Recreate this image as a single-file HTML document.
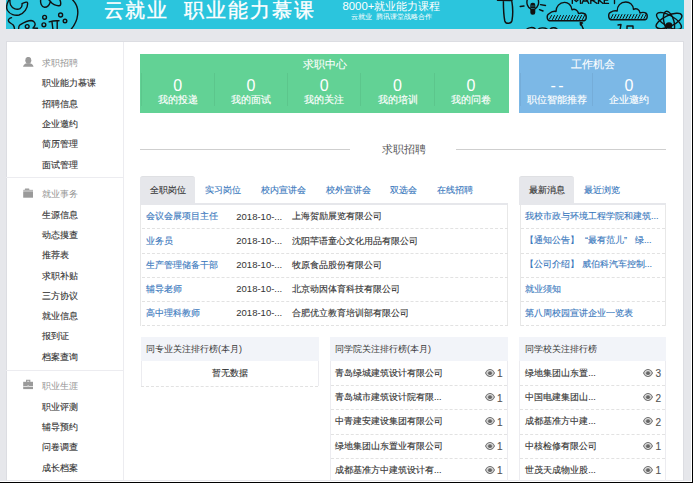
<!DOCTYPE html>
<html><head><meta charset="utf-8">
<style>
*{margin:0;padding:0;box-sizing:border-box}
html,body{width:693px;height:483px;overflow:hidden}
body{background:#e6e7eb;font-family:"Liberation Sans",sans-serif;position:relative;color:#333}
.a{position:absolute;white-space:nowrap}
.sb,.txt,.lnk,.tab{-webkit-text-stroke:0.12px currentColor}
#banner{left:6px;top:0;width:678px;height:29px;background:#2bc5dd;overflow:hidden}
#panel{left:6px;top:41px;width:678px;height:440px;background:#fff;border:1px solid #dcdde2;border-bottom:1px solid #e8e8ec}
#vdiv{left:123px;top:42px;width:1px;height:438px;background:#ececf0}
.sb{font-size:9px;line-height:12px;color:#333;left:42px}
.sh{font-size:9px;line-height:12px;color:#929292;left:42px}
.sep{left:6px;width:117px;height:1px;background:#ececf0}
.box{color:#fff;text-align:center}
.col{position:absolute;top:18.5px;height:33px;border-left:1px solid rgba(0,0,0,0.055)}
.num{position:absolute;left:0;right:0;top:5px;font-size:16px;line-height:16px}
.lab{position:absolute;left:0;right:0;top:21px;font-size:9.5px;line-height:12px;-webkit-text-stroke:0.15px #fff}
.tt{font-size:11px;line-height:12px;-webkit-text-stroke:0.1px #fff}
.tab{font-size:9px;line-height:12px;color:#3978bd}
.lnk{font-size:9px;line-height:12px;color:#3978bd}
.txt{font-size:9px;line-height:12px;color:#333}
.dash{height:0;border-top:1px dashed #e2e2e2}
</style></head><body>
<div id="banner" class="a"><svg class="a" style="left:0;top:0" width="678" height="29" viewBox="6 0 678 29" fill="none" stroke="#111" stroke-width="1.4" stroke-linecap="round" stroke-linejoin="round">
<path d="M9.4 -1 C7 3 5.5 7 7.5 10.5 C10 14.5 15 16 19 15 C24 13.5 28 8 27.6 3 C27.4 1.6 25.5 2 22 3.6 C22.3 5.5 22 7.5 20 8.6 C17 10 12.5 9 10.6 5 C9.8 3.5 9.8 1.5 10 -1"/>
<path d="M40.8 -1 C40 3 41.5 7 44.5 7.3 C47.5 7.5 49.5 4.5 50.5 1.5 C52 4 56 6 59 5.7 C61.5 5.5 61 2 59.5 -1"/>
<path d="M50.5 1.5 C49 0 48 -1 47.5 -2"/>
<path d="M71.8 -1 C76 3 78.5 9 77.6 15 C77 21 74 26 70.5 30"/>
<circle cx="44.6" cy="17.3" r="1.9"/>
<circle cx="43.9" cy="24.8" r="1.9"/>
<circle cx="60.6" cy="15" r="2"/>
<circle cx="65" cy="21" r="1.8"/>
<path d="M49.2 21.8 C52 21 56 20.5 59 20.8"/>
<path d="M52 22 L53 30 M57.2 21.5 L57.2 30"/>
<path d="M11.5 17.6 C9.5 18 8 19.5 8.5 21 C9 23 12 23.5 13.2 25 C14 26 14.5 27.5 14.6 30"/>
<path d="M18.6 30 C18.5 27.5 19 25.5 20 24.8 C24 22.5 28 20.5 31 20.5 C34 20.7 35.5 23 35 25 C34.6 26.5 33.5 27.5 33 28 L37.5 28.3"/>
<circle cx="27.2" cy="26.5" r="1.9"/>

<path d="M497.5 0.3 L512 0.5 M503.4 1 C503.4 8 503.8 16 504.8 21 C505.8 24.2 511 24.2 512 20.5 C513 15 512.8 7 511.8 1" stroke-width="1.45"/>
<path d="M527.5 -1 C526 3 527.5 7.5 531 9 M538 -1 C539.5 3 538 7.5 534.5 9"/>
<rect x="531" y="3.5" width="3.6" height="10.5" rx="1.6" fill="#111"/><path d="M531.3 6 L534.3 6 M531.3 8.5 L534.3 8.5" stroke="#2bc5dd" stroke-width="0.5"/>
<path d="M520.2 6.5 L524 6 M540.5 4.6 L545.5 5.5 M539.5 9.6 L543 11"/>
<path d="M549 13.8 C546.5 14.5 546.5 20 549.5 20.8 L584 20.8 C587 20 587 14.5 584 13.5 C582 12.5 580 13 578.5 13.6 C578 10 574.5 8.5 572 9.8 C571.5 5 568 2.3 564.5 2.4 C559.5 2.5 556 6.5 556 11.5 C554 11 551 12 549 13.8"/>
<path d="M549.5 19 L551.5 15.5 M552.5 19.5 L554.5 15.5 M555.5 19.5 L557.5 15.5 M558.5 19.5 L560.5 15.5 M561.5 19.5 L563.5 15.5 M564.5 19.5 L566.5 15.5 M567.5 19.5 L569.5 15.5 M570.5 19.5 L572.5 15.5 M573.5 19.5 L575.5 15.5 M576.5 19.5 L578.5 15.5 M579.5 19.5 L581.5 15.5 M582.5 19.5 L584.5 15.5" stroke-width="1"/>
<path d="M580.5 22.5 L583.5 29.5 M580.3 22.5 L580.5 25 M580.3 22.5 L582.5 23"/>
<path d="M526.5 29.5 C528 27.3 533 27 535 28.5 M538 29.5 C539 27.5 545 27.3 547 29 M550 29.5 C551 27.5 555 27 557 29"/>
<path d="M572.3 -2 L572.3 3.4 M572.3 -2 L576.3 1.5 L580.3 -2 L580.5 3.4 M582 3.4 L584.8 -3 L588.8 3.4 M583 1 L587.8 1 M590.8 -3 L590.8 3.4 M590.8 0.6 C594.5 0.6 596.5 -0.5 596 -3 M593 0.8 L597 3.4 M598.5 -3 L598.5 3.4 M598.8 1 L602.5 -2.5 M599.5 0.5 L603 3.4 M604.3 -3 L604.3 3.4 L608.5 3.4 M604.3 0 L607.8 0 M614.5 -2 L614.5 3.6" stroke-width="1.35"/>
<path d="M610.5 12.3 C608 13 608 19 611 19.8 L645 19.8 C648 19 648 13.5 645 12.7 C643 12 641.5 12.3 640 13 C639.5 9 636 8 633.5 9.4 C633 4.5 629.5 2 625.8 2 C620.5 2 617 6 617.2 11 C615 10.5 612.5 11 610.5 12.3"/>
<path d="M611 18.5 L613 14.5 M614 18.5 L616 14.5 M617 18.5 L619 14.5 M620 18.5 L622 14.5 M623 18.5 L625 14.5 M626 18.5 L628 14.5 M629 18.5 L631 14.5 M632 18.5 L634 14.5 M635 18.5 L637 14.5 M638 18.5 L640 14.5 M641 18.5 L643 14.5 M644 18.5 L646 14.5" stroke-width="1"/>
<path d="M618 25 L621 24.5 L620 30 M627 29.5 L627 26 L633 26 L633 29.5"/>
<ellipse cx="669" cy="21" rx="14" ry="5.5" transform="rotate(-25 669 21)"/>
<ellipse cx="669" cy="21" rx="14" ry="5.5" transform="rotate(30 669 21)"/>
<ellipse cx="669" cy="22" rx="5" ry="11" transform="rotate(-15 669 22)"/>
<circle cx="669" cy="25.5" r="2.6" fill="#111"/>
</svg>

<div class="a" style="left:98px;top:-2px;font-size:19.5px;line-height:24px;color:#fff;font-weight:400;-webkit-text-stroke:0.35px #fff;letter-spacing:1.3px">云就业</div>
<div class="a" style="left:178px;top:-2px;font-size:19.5px;line-height:24px;color:#fff;font-weight:400;-webkit-text-stroke:0.35px #fff;letter-spacing:2px">职业能力慕课</div>
<div class="a" style="left:336.5px;top:-1.5px;font-size:11.35px;line-height:14px;color:#fff;font-weight:300">8000+就业能力课程</div>
<div class="a" style="left:345px;top:12.8px;font-size:10px;line-height:10px;color:#fff;transform:scale(0.70);transform-origin:0 0">云就业 &nbsp;腾讯课堂战略合作</div>
</div>
<div id="panel" class="a"></div>
<div id="vdiv" class="a"></div>
<div class="a sh" style="top:57.2px">求职招聘</div>
<div class="a sb" style="top:77.2px">职业能力慕课</div>
<div class="a sb" style="top:97.6px">招聘信息</div>
<div class="a sb" style="top:118.0px">企业邀约</div>
<div class="a sb" style="top:138.3px">简历管理</div>
<div class="a sb" style="top:158.5px">面试管理</div>
<div class="a sep" style="top:177px"></div>
<div class="a sh" style="top:187.5px">就业事务</div>
<div class="a sb" style="top:208.6px">生源信息</div>
<div class="a sb" style="top:228.9px">动态摸查</div>
<div class="a sb" style="top:249.2px">推荐表</div>
<div class="a sb" style="top:269.5px">求职补贴</div>
<div class="a sb" style="top:289.8px">三方协议</div>
<div class="a sb" style="top:310.1px">就业信息</div>
<div class="a sb" style="top:330.4px">报到证</div>
<div class="a sb" style="top:350.7px">档案查询</div>
<div class="a sep" style="top:370px"></div>
<div class="a sh" style="top:380.0px">职业生涯</div>
<div class="a sb" style="top:400.6px">职业评测</div>
<div class="a sb" style="top:421.0px">辅导预约</div>
<div class="a sb" style="top:441.3px">问卷调查</div>
<div class="a sb" style="top:461.7px">成长档案</div>

<svg class="a" style="left:23px;top:57px" width="11" height="10" viewBox="0 0 11 10"><ellipse cx="5.3" cy="3.3" rx="3" ry="3.4" fill="#9a9a9a"/><path d="M0 9.8 C0.6 7.6 2.2 6.6 4 6.3 L6.6 6.3 C8.4 6.6 10 7.6 10.6 9.8 Z" fill="#9a9a9a"/></svg>
<svg class="a" style="left:23px;top:188px" width="11" height="10" viewBox="0 0 11 10"><rect x="1.8" y="0.6" width="4.6" height="1.4" rx="0.6" fill="#9a9a9a"/><rect x="0.2" y="1.8" width="9.8" height="2.1" fill="#b8b8b8"/><rect x="0.2" y="3.9" width="9.8" height="5.8" fill="#9a9a9a"/></svg>
<svg class="a" style="left:23px;top:379px" width="11" height="11" viewBox="0 0 11 11"><rect x="3.6" y="1.3" width="3.2" height="2" fill="none" stroke="#9a9a9a" stroke-width="1.1"/><rect x="0.2" y="2.8" width="9.8" height="7.3" fill="#9a9a9a"/><rect x="0.2" y="7" width="9.8" height="0.7" fill="#fff"/><rect x="4.4" y="6" width="1.5" height="1.5" fill="#c8c8c8"/></svg>

<div class="a box" style="left:140px;top:54px;width:369px;height:58.5px;background:#62d295"><div class="a tt" style="left:0;right:0;top:4.1px">求职中心</div><div class="col" style="left:0.5px;width:73.3px"><div class="num">0</div><div class="lab">我的投递</div></div><div class="col" style="left:73.8px;width:73.3px"><div class="num">0</div><div class="lab">我的面试</div></div><div class="col" style="left:147.1px;width:73.3px"><div class="num">0</div><div class="lab">我的关注</div></div><div class="col" style="left:220.4px;width:73.3px"><div class="num">0</div><div class="lab">我的培训</div></div><div class="col" style="left:293.7px;width:73.3px"><div class="num">0</div><div class="lab">我的问卷</div></div></div>
<div class="a box" style="left:519.3px;top:54px;width:147px;height:58.5px;background:#7cb8e6"><div class="a tt" style="left:0;right:0;top:4.1px">工作机会</div><div class="col" style="left:1px;width:72.4px"><div class="num" style="letter-spacing:2.5px;text-indent:2.5px">--</div><div class="lab">职位智能推荐</div></div><div class="col" style="left:72.4px;width:73.3px"><div class="num">0</div><div class="lab">企业邀约</div></div></div>
<div class="a" style="left:140px;top:149px;width:210px;height:1px;background:#cfcfcf"></div><div class="a" style="left:456px;top:149px;width:210px;height:1px;background:#cfcfcf"></div><div class="a" style="left:382px;top:142.7px;font-size:10.5px;line-height:12px;color:#555">求职招聘</div>
<div class="a" style="left:140.4px;top:176px;width:54.6px;height:27.5px;background:#e6e7eb;border-radius:3px 3px 0 0;border-top:1px solid #dfe0e3"></div><div class="a" style="left:140px;top:203px;width:368px;height:2px;background:#e6e7eb"></div><div class="a tab" style="left:149.7px;top:184.3px;color:#333">全职岗位</div><div class="a tab" style="left:204.7px;top:184.3px;">实习岗位</div><div class="a tab" style="left:261.0px;top:184.3px;">校内宣讲会</div><div class="a tab" style="left:325.7px;top:184.3px;">校外宣讲会</div><div class="a tab" style="left:390.4px;top:184.3px;">双选会</div><div class="a tab" style="left:436.9px;top:184.3px;">在线招聘</div><div class="a" style="left:519.4px;top:176px;width:54.6px;height:27.5px;background:#e6e7eb;border-radius:3px 3px 0 0;border-top:1px solid #dfe0e3"></div><div class="a" style="left:519.4px;top:203px;width:146.6px;height:2px;background:#e6e7eb"></div><div class="a tab" style="left:528.5px;top:184.3px;color:#333">最新消息</div><div class="a tab" style="left:584.2px;top:184.3px">最近浏览</div>
<div class="a" style="left:140px;top:205px;width:368px;height:120.5px;border-left:1px solid #e8e8e8;border-right:1px solid #e8e8e8"></div><div class="a lnk" style="left:145.7px;top:210.4px">会议会展项目主任</div><div class="a txt" style="left:236.3px;top:210.9px;font-size:9.5px;-webkit-text-stroke:0">2018-10-...</div><div class="a txt" style="left:292.4px;top:210.4px">上海贺励展览有限公司</div><div class="a dash" style="left:141.5px;top:228.3px;width:366px"></div><div class="a lnk" style="left:145.7px;top:234.5px">业务员</div><div class="a txt" style="left:236.3px;top:235.0px;font-size:9.5px;-webkit-text-stroke:0">2018-10-...</div><div class="a txt" style="left:292.4px;top:234.5px">沈阳芊语童心文化用品有限公司</div><div class="a dash" style="left:141.5px;top:252.5px;width:366px"></div><div class="a lnk" style="left:145.7px;top:258.5px">生产管理储备干部</div><div class="a txt" style="left:236.3px;top:259.0px;font-size:9.5px;-webkit-text-stroke:0">2018-10-...</div><div class="a txt" style="left:292.4px;top:258.5px">牧原食品股份有限公司</div><div class="a dash" style="left:141.5px;top:276.6px;width:366px"></div><div class="a lnk" style="left:145.7px;top:282.6px">辅导老师</div><div class="a txt" style="left:236.3px;top:283.1px;font-size:9.5px;-webkit-text-stroke:0">2018-10-...</div><div class="a txt" style="left:292.4px;top:282.6px">北京动因体育科技有限公司</div><div class="a dash" style="left:141.5px;top:300.8px;width:366px"></div><div class="a lnk" style="left:145.7px;top:306.6px">高中理科教师</div><div class="a txt" style="left:236.3px;top:307.1px;font-size:9.5px;-webkit-text-stroke:0">2018-10-...</div><div class="a txt" style="left:292.4px;top:306.6px">合肥优立教育培训部有限公司</div><div class="a dash" style="left:141.5px;top:324.9px;width:366px"></div>
<div class="a" style="left:519.5px;top:205px;width:146.3px;height:120.5px;border-left:1px solid #e8e8e8;border-right:1px solid #e8e8e8"></div><div class="a lnk" style="left:525px;top:210.3px">我校市政与环境工程学院和建筑...</div><div class="a dash" style="left:520.5px;top:228.3px;width:144.3px"></div><div class="a lnk" style="left:525px;top:234.4px">【通知公告】<span style="display:inline-block;width:9px;text-align:right">“</span>最有范儿<span style="display:inline-block;width:11px;text-align:left">”</span>绿...</div><div class="a dash" style="left:520.5px;top:252.5px;width:144.3px"></div><div class="a lnk" style="left:525px;top:258.4px">【公司介绍】 威伯科汽车控制...</div><div class="a dash" style="left:520.5px;top:276.6px;width:144.3px"></div><div class="a lnk" style="left:525px;top:282.5px">就业须知</div><div class="a dash" style="left:520.5px;top:300.8px;width:144.3px"></div><div class="a lnk" style="left:525px;top:306.5px">第八周校园宣讲企业一览表</div><div class="a dash" style="left:520.5px;top:324.9px;width:144.3px"></div>
<div class="a" style="left:140.5px;top:337px;width:178.2px;height:49.0px;border:1px solid #ececf0;border-bottom:none"></div><div class="a" style="left:140.5px;top:337px;width:178.2px;height:24px;background:#f2f4f9"></div><div class="a txt" style="left:146.0px;top:343.4px;-webkit-text-stroke:0;color:#3a3a3a">同专业关注排行榜(本月)</div><div class="a txt" style="left:140.5px;width:178.2px;text-align:center;top:367px">暂无数据</div><div class="a dash" style="left:141px;top:385.5px;width:177.2px"></div><div class="a" style="left:329.5px;top:337px;width:178.7px;height:144.0px;border:1px solid #ececf0;border-bottom:none"></div><div class="a" style="left:329.5px;top:337px;width:178.7px;height:24px;background:#f2f4f9"></div><div class="a txt" style="left:335.0px;top:343.4px;-webkit-text-stroke:0;color:#3a3a3a">同学院关注排行榜(本月)</div><div class="a" style="left:519.4px;top:337px;width:146.7px;height:144.0px;border:1px solid #ececf0;border-bottom:none"></div><div class="a" style="left:519.4px;top:337px;width:146.7px;height:24px;background:#f2f4f9"></div><div class="a txt" style="left:524.9px;top:343.4px;-webkit-text-stroke:0;color:#3a3a3a">同学校关注排行榜</div><div class="a txt" style="left:335px;top:367.3px">青岛绿城建筑设计有限公司</div><svg class="a" style="left:485.0px;top:369.3px" width="10" height="8" viewBox="0 0 10 8"><path d="M0.5 4 C2 1.2 3.5 0.5 5 0.5 C6.5 0.5 8 1.2 9.5 4 C8 6.8 6.5 7.5 5 7.5 C3.5 7.5 2 6.8 0.5 4 Z" fill="none" stroke="#7a7a7a" stroke-width="1.2"/><path d="M2 4 C3 2.3 4 1.8 5 1.8 C6 1.8 7 2.3 8 4 C7 5.7 6 6.2 5 6.2 C4 6.2 3 5.7 2 4 Z" fill="#aaa"/><circle cx="5" cy="4.3" r="1.8" fill="#666"/></svg><div class="a txt" style="left:497px;top:368.4px;font-size:10px;color:#555">1</div><div class="a txt" style="left:525.2px;top:367.3px">绿地集团山东置...</div><svg class="a" style="left:643.3px;top:369.3px" width="10" height="8" viewBox="0 0 10 8"><path d="M0.5 4 C2 1.2 3.5 0.5 5 0.5 C6.5 0.5 8 1.2 9.5 4 C8 6.8 6.5 7.5 5 7.5 C3.5 7.5 2 6.8 0.5 4 Z" fill="none" stroke="#7a7a7a" stroke-width="1.2"/><path d="M2 4 C3 2.3 4 1.8 5 1.8 C6 1.8 7 2.3 8 4 C7 5.7 6 6.2 5 6.2 C4 6.2 3 5.7 2 4 Z" fill="#aaa"/><circle cx="5" cy="4.3" r="1.8" fill="#666"/></svg><div class="a txt" style="left:655.5px;top:368.4px;font-size:10px;color:#555">3</div><div class="a dash" style="left:330.5px;top:385.4px;width:176.7px"></div><div class="a dash" style="left:520.4px;top:385.4px;width:144.7px"></div><div class="a txt" style="left:335px;top:391.4px">青岛城市建筑设计院有限...</div><svg class="a" style="left:485.0px;top:393.4px" width="10" height="8" viewBox="0 0 10 8"><path d="M0.5 4 C2 1.2 3.5 0.5 5 0.5 C6.5 0.5 8 1.2 9.5 4 C8 6.8 6.5 7.5 5 7.5 C3.5 7.5 2 6.8 0.5 4 Z" fill="none" stroke="#7a7a7a" stroke-width="1.2"/><path d="M2 4 C3 2.3 4 1.8 5 1.8 C6 1.8 7 2.3 8 4 C7 5.7 6 6.2 5 6.2 C4 6.2 3 5.7 2 4 Z" fill="#aaa"/><circle cx="5" cy="4.3" r="1.8" fill="#666"/></svg><div class="a txt" style="left:497px;top:392.5px;font-size:10px;color:#555">1</div><div class="a txt" style="left:525.2px;top:391.4px">中国电建集团山...</div><svg class="a" style="left:643.3px;top:393.4px" width="10" height="8" viewBox="0 0 10 8"><path d="M0.5 4 C2 1.2 3.5 0.5 5 0.5 C6.5 0.5 8 1.2 9.5 4 C8 6.8 6.5 7.5 5 7.5 C3.5 7.5 2 6.8 0.5 4 Z" fill="none" stroke="#7a7a7a" stroke-width="1.2"/><path d="M2 4 C3 2.3 4 1.8 5 1.8 C6 1.8 7 2.3 8 4 C7 5.7 6 6.2 5 6.2 C4 6.2 3 5.7 2 4 Z" fill="#aaa"/><circle cx="5" cy="4.3" r="1.8" fill="#666"/></svg><div class="a txt" style="left:655.5px;top:392.5px;font-size:10px;color:#555">2</div><div class="a dash" style="left:330.5px;top:409.4px;width:176.7px"></div><div class="a dash" style="left:520.4px;top:409.4px;width:144.7px"></div><div class="a txt" style="left:335px;top:415.4px">中青建安建设集团有限公司</div><svg class="a" style="left:485.0px;top:417.4px" width="10" height="8" viewBox="0 0 10 8"><path d="M0.5 4 C2 1.2 3.5 0.5 5 0.5 C6.5 0.5 8 1.2 9.5 4 C8 6.8 6.5 7.5 5 7.5 C3.5 7.5 2 6.8 0.5 4 Z" fill="none" stroke="#7a7a7a" stroke-width="1.2"/><path d="M2 4 C3 2.3 4 1.8 5 1.8 C6 1.8 7 2.3 8 4 C7 5.7 6 6.2 5 6.2 C4 6.2 3 5.7 2 4 Z" fill="#aaa"/><circle cx="5" cy="4.3" r="1.8" fill="#666"/></svg><div class="a txt" style="left:497px;top:416.5px;font-size:10px;color:#555">1</div><div class="a txt" style="left:525.2px;top:415.4px">成都基准方中建...</div><svg class="a" style="left:643.3px;top:417.4px" width="10" height="8" viewBox="0 0 10 8"><path d="M0.5 4 C2 1.2 3.5 0.5 5 0.5 C6.5 0.5 8 1.2 9.5 4 C8 6.8 6.5 7.5 5 7.5 C3.5 7.5 2 6.8 0.5 4 Z" fill="none" stroke="#7a7a7a" stroke-width="1.2"/><path d="M2 4 C3 2.3 4 1.8 5 1.8 C6 1.8 7 2.3 8 4 C7 5.7 6 6.2 5 6.2 C4 6.2 3 5.7 2 4 Z" fill="#aaa"/><circle cx="5" cy="4.3" r="1.8" fill="#666"/></svg><div class="a txt" style="left:655.5px;top:416.5px;font-size:10px;color:#555">2</div><div class="a dash" style="left:330.5px;top:433.5px;width:176.7px"></div><div class="a dash" style="left:520.4px;top:433.5px;width:144.7px"></div><div class="a txt" style="left:335px;top:439.5px">绿地集团山东置业有限公司</div><svg class="a" style="left:485.0px;top:441.5px" width="10" height="8" viewBox="0 0 10 8"><path d="M0.5 4 C2 1.2 3.5 0.5 5 0.5 C6.5 0.5 8 1.2 9.5 4 C8 6.8 6.5 7.5 5 7.5 C3.5 7.5 2 6.8 0.5 4 Z" fill="none" stroke="#7a7a7a" stroke-width="1.2"/><path d="M2 4 C3 2.3 4 1.8 5 1.8 C6 1.8 7 2.3 8 4 C7 5.7 6 6.2 5 6.2 C4 6.2 3 5.7 2 4 Z" fill="#aaa"/><circle cx="5" cy="4.3" r="1.8" fill="#666"/></svg><div class="a txt" style="left:497px;top:440.6px;font-size:10px;color:#555">1</div><div class="a txt" style="left:525.2px;top:439.5px">中核检修有限公司</div><svg class="a" style="left:643.3px;top:441.5px" width="10" height="8" viewBox="0 0 10 8"><path d="M0.5 4 C2 1.2 3.5 0.5 5 0.5 C6.5 0.5 8 1.2 9.5 4 C8 6.8 6.5 7.5 5 7.5 C3.5 7.5 2 6.8 0.5 4 Z" fill="none" stroke="#7a7a7a" stroke-width="1.2"/><path d="M2 4 C3 2.3 4 1.8 5 1.8 C6 1.8 7 2.3 8 4 C7 5.7 6 6.2 5 6.2 C4 6.2 3 5.7 2 4 Z" fill="#aaa"/><circle cx="5" cy="4.3" r="1.8" fill="#666"/></svg><div class="a txt" style="left:655.5px;top:440.6px;font-size:10px;color:#555">1</div><div class="a dash" style="left:330.5px;top:457.5px;width:176.7px"></div><div class="a dash" style="left:520.4px;top:457.5px;width:144.7px"></div><div class="a txt" style="left:335px;top:463.5px">成都基准方中建筑设计有...</div><svg class="a" style="left:485.0px;top:465.5px" width="10" height="8" viewBox="0 0 10 8"><path d="M0.5 4 C2 1.2 3.5 0.5 5 0.5 C6.5 0.5 8 1.2 9.5 4 C8 6.8 6.5 7.5 5 7.5 C3.5 7.5 2 6.8 0.5 4 Z" fill="none" stroke="#7a7a7a" stroke-width="1.2"/><path d="M2 4 C3 2.3 4 1.8 5 1.8 C6 1.8 7 2.3 8 4 C7 5.7 6 6.2 5 6.2 C4 6.2 3 5.7 2 4 Z" fill="#aaa"/><circle cx="5" cy="4.3" r="1.8" fill="#666"/></svg><div class="a txt" style="left:497px;top:464.6px;font-size:10px;color:#555">1</div><div class="a txt" style="left:525.2px;top:463.5px">世茂天成物业股...</div><svg class="a" style="left:643.3px;top:465.5px" width="10" height="8" viewBox="0 0 10 8"><path d="M0.5 4 C2 1.2 3.5 0.5 5 0.5 C6.5 0.5 8 1.2 9.5 4 C8 6.8 6.5 7.5 5 7.5 C3.5 7.5 2 6.8 0.5 4 Z" fill="none" stroke="#7a7a7a" stroke-width="1.2"/><path d="M2 4 C3 2.3 4 1.8 5 1.8 C6 1.8 7 2.3 8 4 C7 5.7 6 6.2 5 6.2 C4 6.2 3 5.7 2 4 Z" fill="#aaa"/><circle cx="5" cy="4.3" r="1.8" fill="#666"/></svg><div class="a txt" style="left:655.5px;top:464.6px;font-size:10px;color:#555">1</div>
<div class="a" style="left:692px;top:0;width:1px;height:483px;background:#000"></div>
<div class="a" style="left:691px;top:0;width:1px;height:482px;background:#fff"></div>
<div class="a" style="left:0;top:482px;width:693px;height:1px;background:#000"></div>
<div class="a" style="left:0;top:481px;width:692px;height:1px;background:#fff"></div>
</body></html>
